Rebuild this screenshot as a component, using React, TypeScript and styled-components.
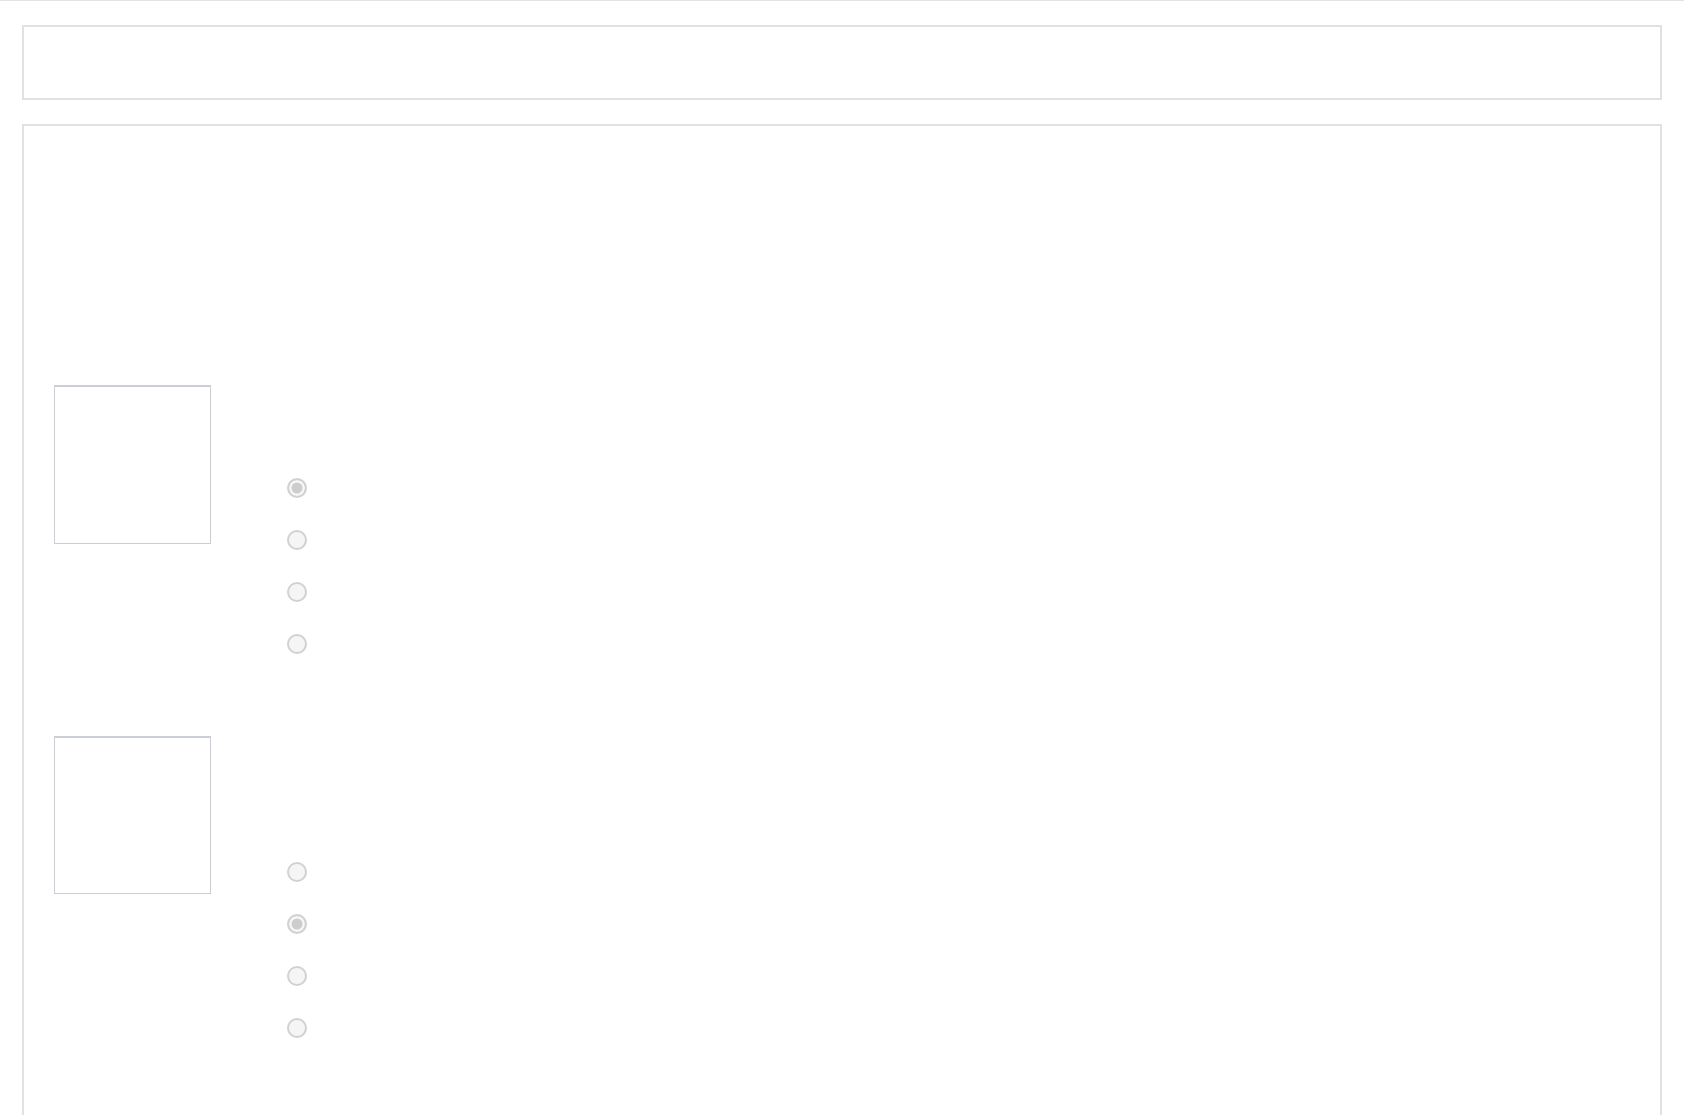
import React from "react";
import styled, { createGlobalStyle } from "styled-components";

const GlobalStyle = createGlobalStyle`
  html, body {
    margin: 0;
    padding: 0;
    background: #ffffff;
  }
  body {
    font-family: "Liberation Sans", Arial, sans-serif;
    color: #333;
  }
`;

const Page = styled.div`
  border-top: 1px solid #e3e3e3;
  padding: 24px 22px 0;
  display: flex;
  flex-direction: column;
  gap: 24px;
`;

const HeaderBox = styled.header`
  box-sizing: border-box;
  height: 75px;
  border: 2px solid #e1e1e1;
  background: #ffffff;
`;

const Panel = styled.main`
  box-sizing: border-box;
  border: 2px solid #e1e1e1;
  background: #ffffff;
  padding: 259px 30px 120px;
  display: flex;
  flex-direction: column;
  gap: 66px;
`;

const Question = styled.section`
  display: flex;
  align-items: flex-start;
`;

const ImageFrame = styled.div<{ $h: number }>`
  box-sizing: border-box;
  flex: 0 0 157px;
  width: 157px;
  height: ${(p) => p.$h}px;
  border: 1px solid #c9ced7;
  border-top-width: 2px;
  background: #ffffff;
`;

const Options = styled.ul<{ $offset: number }>`
  list-style: none;
  margin: ${(p) => p.$offset}px 0 0 76px;
  padding: 0;
  display: flex;
  flex-direction: column;
`;

const OptionRow = styled.li`
  height: 52px;
  display: flex;
  align-items: center;
`;

const Radio = styled.input`
  appearance: none;
  -webkit-appearance: none;
  box-sizing: border-box;
  margin: 0;
  width: 20px;
  height: 20px;
  border-radius: 50%;
  border: 2px solid #d1d1d1;
  background: #f5f5f5;

  &:checked {
    background: #cdcdcd;
    box-shadow: inset 0 0 0 2.5px #f7f7f7;
  }
`;

type Q = { id: string; imgH: number; offset: number; checked: number };

const questions: Q[] = [
  { id: "q1", imgH: 159, offset: 77, checked: 0 },
  { id: "q2", imgH: 158, offset: 110, checked: 1 },
];

export default function App() {
  return (
    <>
      <GlobalStyle />
      <Page>
        <HeaderBox />
        <Panel>
          {questions.map((q) => (
            <Question key={q.id}>
              <ImageFrame $h={q.imgH} />
              <Options $offset={q.offset}>
                {[0, 1, 2, 3].map((i) => (
                  <OptionRow key={i}>
                    <Radio
                      type="radio"
                      name={q.id}
                      disabled
                      defaultChecked={i === q.checked}
                      aria-label={`${q.id} option ${i + 1}`}
                    />
                  </OptionRow>
                ))}
              </Options>
            </Question>
          ))}
        </Panel>
      </Page>
    </>
  );
}
